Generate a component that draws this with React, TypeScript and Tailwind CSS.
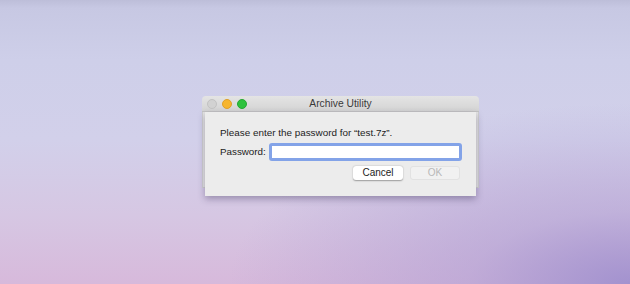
import React from 'react';

const font = { fontFamily: '"Liberation Sans", Arial, sans-serif' };

function TrafficLights() {
    return (
        <div className="flex items-center gap-[5px] pl-[5px]">
            <span className="block w-[10px] h-[10px] rounded-full bg-[#d2d2d2] border border-[#c2c2c2]" />
            <span className="block w-[10px] h-[10px] rounded-full bg-[#f6b52e] border border-[#e0a028]" />
            <span className="block w-[10px] h-[10px] rounded-full bg-[#2ec23e] border border-[#25a833]" />
        </div>
    );
}

function PasswordSheet() {
    return (
        <div className="w-[271px] h-[84px] bg-[#ececec] pl-[15px] pr-[14px] pt-[14px] shadow-[0_3px_7px_rgba(40,30,70,0.35)]">
            <p className="text-[9.9px] leading-[14px] text-[#222]">
                Please enter the password for “test.7z”.
            </p>
            <div className="flex items-center gap-[3px] mt-[3px]">
                <span className="text-[9.8px] leading-[14px] text-[#222]">Password:</span>
                <div className="flex-1 h-[18px] rounded-[3px] border-[3px] border-[#83a3e8] bg-white" />
            </div>
            <div className="flex justify-end gap-[7px] mt-[5px] mr-[2px]">
                <button className="w-[50px] h-[14px] rounded-[3px] bg-white text-[10px] leading-[14px] text-[#1c1c1c] shadow-[0_0.5px_1.5px_rgba(0,0,0,0.35)]">
                    Cancel
                </button>
                <button className="w-[50px] h-[14px] rounded-[3px] bg-[#f1f1f1] border border-[#e2e2e2] text-[10px] leading-[12px] text-[#b8b8b8]">
                    OK
                </button>
            </div>
        </div>
    );
}

export default function App() {
    return (
        <div
            style={font}
            className="w-[630px] h-[284px] overflow-hidden pl-[202px] pt-[96px] bg-[radial-gradient(ellipse_at_100%_100%,rgba(160,144,206,0.95)_0%,rgba(170,155,210,0.5)_18%,transparent_45%),linear-gradient(to_bottom,#bdbed9_0px,#c7c8e3_8px,#cecfe9_60px,#d2d0ea_140px,#d6c7e3_215px,#d7b9db_284px)]"
        >
            <div className="w-[277px]">
                {/* title bar */}
                <div className="grid grid-cols-[1fr_auto_1fr] items-center h-[16px] rounded-t-[4px] bg-[linear-gradient(to_bottom,#e4e4e4,#d4d4d4)] border-b border-[#c3c3c3]">
                    <TrafficLights />
                    <span className="text-[10.3px] leading-[16px] text-[#3a3a3a]">Archive Utility</span>
                    <span />
                </div>
                {/* window body with sheet over it */}
                <div className="h-[76px] px-[2px] bg-[#e4e4e4] border-x border-b border-[#cfcfcf]">
                    <PasswordSheet />
                </div>
            </div>
        </div>
    );
}
